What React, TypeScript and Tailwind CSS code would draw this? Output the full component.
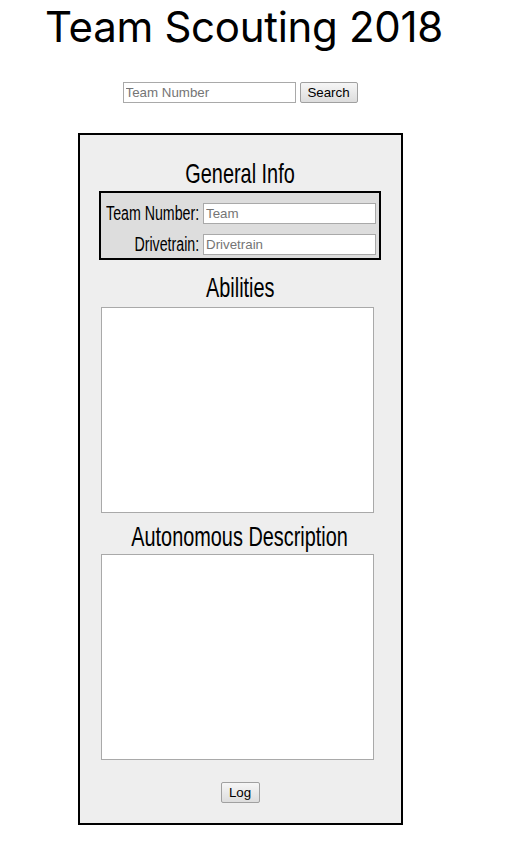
import { useState } from "react";

const narrow = "font-['Liberation_Sans',Arial,sans-serif] inline-block whitespace-nowrap scale-x-[0.71]";
const heading = "w-full text-center text-[28px] leading-[32px] text-black";
const field = "border border-[#a9a9a9] bg-white px-[2px] font-['Liberation_Sans',Arial,sans-serif] text-[13.33px] text-black placeholder:text-[#757575] outline-none";
const btn = "border border-[#a0a0a0] rounded-[2px] bg-gradient-to-b from-[#f6f6f6] to-[#dddddd] px-[6px] font-['Liberation_Sans',Arial,sans-serif] text-[13.33px] leading-[19px] text-black";
const area = "w-[273px] h-[206px] mr-[5px] border border-[#a9a9a9] bg-white resize-none outline-none";

const App = () => {
  const [team, setTeam] = useState("");

  return (
    <div className="min-h-screen bg-white">
      <div className="w-[480px] flex flex-col items-center">
        <h1 className="mt-[3px] ml-[8px] font-['Inter',sans-serif] text-[42px] leading-[48px] font-normal tracking-[-0.3px] text-black">
          Team Scouting 2018
        </h1>

        <div className="mt-[31px] flex items-center gap-[4px]">
          <input
            value={team}
            onChange={(e) => setTeam(e.target.value)}
            placeholder="Team Number"
            className={`${field} w-[173px] h-[21px]`}
          />
          <button className={`${btn} h-[21px] w-[58px]`}>Search</button>
        </div>

        <div className="mt-[30px] w-[325px] border-2 border-black bg-[#eeeeee] flex flex-col items-center pt-[21px] pb-[20px]">
          <h2 className={heading}>
            <span className={narrow}>General Info</span>
          </h2>
          <div className="mt-[1px] w-[282px] border-2 border-black bg-[#dddddd] pt-[10px] pb-[3px] pr-[3px] flex flex-col gap-[10px]">
            <div className="flex items-center justify-end gap-[4px]">
              <div className="w-[94px] flex justify-end">
                <span className={`${narrow} shrink-0 origin-right text-[20px] leading-[21px]`}>Team Number:</span>
              </div>
              <input placeholder="Team" className={`${field} w-[173px] h-[21px]`} />
            </div>
            <div className="flex items-center justify-end gap-[4px]">
              <div className="w-[94px] flex justify-end">
                <span className={`${narrow} shrink-0 origin-right text-[20px] leading-[21px]`}>Drivetrain:</span>
              </div>
              <input placeholder="Drivetrain" className={`${field} w-[173px] h-[21px]`} />
            </div>
          </div>

          <h2 className={`${heading} mt-[10px]`}>
            <span className={narrow}>Abilities</span>
          </h2>
          <textarea className={`${area} mt-[3px]`} />

          <h2 className={`${heading} mt-[6px]`}>
            <span className={narrow}>Autonomous Description</span>
          </h2>
          <textarea className={`${area} mt-[1px]`} />

          <button className={`${btn} mt-[22px] h-[21px] w-[39px]`}>Log</button>
        </div>
      </div>
    </div>
  );
};

export default App;
